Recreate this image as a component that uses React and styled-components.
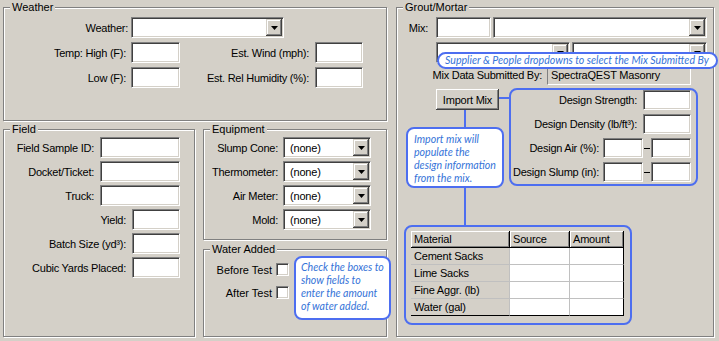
import React from 'react';
import styled, { createGlobalStyle } from 'styled-components';

const BG = '#d4d0c8';
const BLUE = '#4d6ef0';
const NOTE = '#3573d8';

const GlobalStyle = createGlobalStyle`
  html, body { margin: 0; padding: 0; background: ${BG}; }
  body {
    font-family: "Liberation Sans", Arial, sans-serif;
    font-size: 11px;
    letter-spacing: -0.2px;
    color: #000;
  }
  * { box-sizing: border-box; }
`;

const Page = styled.div`
  width: 719px;
  height: 341px;
  padding: 7px 0 0 3px;
  display: grid;
  grid-template-columns: 384px 318px;
  column-gap: 9px;
  align-items: start;
  background: ${BG};
  overflow: hidden;
`;

const LeftSide = styled.div`
  display: flex;
  flex-direction: column;
  gap: 8px;
`;

const Split = styled.div`
  display: grid;
  grid-template-columns: 192px 184px;
  column-gap: 8px;
  align-items: start;
`;

const Stack = styled.div`
  display: flex;
  flex-direction: column;
  gap: 9px;
`;

// etched windows group box
const Group = styled.div`
  position: relative;
  width: ${(p) => p.$w}px;
  height: ${(p) => p.$h}px;
  border: 1px solid #808080;
  box-shadow: inset 1px 1px 0 #fff, 1px 1px 0 #fff;
`;

const Legend = styled.div`
  width: fit-content;
  margin: -8px 0 0 6px;
  padding: 0 2px;
  height: 14px;
  line-height: 14px;
  letter-spacing: 0;
  background: ${BG};
`;

const Label = styled.div`
  text-align: right;
  white-space: nowrap;
  letter-spacing: ${(p) => (p.$plain ? 0 : -0.25)}px;
  padding-right: ${(p) => p.$pad || 0}px;
`;

const Sunken = styled.div`
  width: ${(p) => p.$w}px;
  height: ${(p) => p.$h || 21}px;
  flex-shrink: 0;
  background: #fff;
  border: 1px solid;
  border-color: #808080 #fff #fff #808080;
  box-shadow: inset 1px 1px 0 #404040, inset -1px -1px 0 ${BG};
`;

const ReadOnly = styled.div`
  width: ${(p) => p.$w}px;
  height: 20px;
  border: 1px solid;
  border-color: #808080 #fff #fff #808080;
  padding-left: 3px;
  line-height: 18px;
  white-space: nowrap;
`;

const SelectBox = styled(Sunken)`
  display: flex;
  align-items: center;
  padding: 1px 1px 1px 6px;
`;

const SelectText = styled.span`
  flex: 1;
  white-space: nowrap;
`;

const DropBtn = styled.div`
  width: 16px;
  height: 100%;
  background: ${BG};
  box-shadow: inset -1px -1px 0 #404040, inset 1px 1px 0 ${BG}, inset -2px -2px 0 #808080, inset 2px 2px 0 #fff;
  display: flex;
  align-items: center;
  justify-content: center;
`;

const Select = ({ w, value }) => (
  <SelectBox $w={w}>
    <SelectText>{value}</SelectText>
    <DropBtn>
      <svg width="7" height="4" viewBox="0 0 7 4">
        <polygon points="0,0 7,0 3.5,4" fill="#000" />
      </svg>
    </DropBtn>
  </SelectBox>
);

const CheckBox = styled(Sunken)`
  width: 13px;
  height: 13px;
`;

const Button = styled.div`
  width: ${(p) => p.$w}px;
  height: 21px;
  flex-shrink: 0;
  display: flex;
  align-items: center;
  justify-content: center;
  background: ${BG};
  box-shadow: inset -1px -1px 0 #404040, inset 1px 1px 0 #fff, inset -2px -2px 0 #808080, inset 2px 2px 0 ${BG};
`;

/* weather */
const WeatherGrid = styled.div`
  display: grid;
  grid-template-columns: 127px 49px 135px 48px;
  grid-auto-rows: 21px;
  row-gap: 4px;
  margin-top: 3px;
  align-items: center;
`;

const Wide = styled.div`
  grid-column: 2 / span 3;
`;

/* stacked right aligned rows */
const Rows = styled.div`
  display: flex;
  flex-direction: column;
  gap: ${(p) => p.$gap || 3}px;
  padding: ${(p) => p.$pad};
`;

const Row = styled.div`
  display: flex;
  align-items: center;
  justify-content: flex-end;
  gap: ${(p) => p.$gap || 6}px;
  height: ${(p) => p.$h || 21}px;
`;

/* water */
const WaterBody = styled.div`
  display: flex;
  align-items: flex-start;
`;

const CheckCol = styled.div`
  width: 85px;
  flex-shrink: 0;
  margin-top: 3px;
  display: flex;
  flex-direction: column;
  gap: 2px;
`;

const Callout = styled.div`
  flex-shrink: 0;
  width: ${(p) => p.$w}px;
  height: ${(p) => p.$h}px;
  margin-left: ${(p) => p.$ml || 0}px;
  padding: ${(p) => p.$pad};
  background: #fff;
  border: 2px solid ${BLUE};
  border-radius: 8px;
  color: ${NOTE};
  font-family: Lato, "Open Sans", sans-serif;
  font-style: italic;
  font-size: 10.6px;
  letter-spacing: 0;
  line-height: 13px;
  white-space: nowrap;
`;

const TopNote = styled(Callout)`
  position: absolute;
  left: 40px;
  top: 44px;
  border-radius: 9px;
`;

/* grout */
const GroutTop = styled.div`
  padding-top: 3px;
  display: flex;
  flex-direction: column;
`;

const MixRow = styled.div`
  display: flex;
  align-items: center;
  gap: ${(p) => p.$gap || 2}px;
  height: ${(p) => p.$h || 21}px;
  margin-top: ${(p) => p.$mt || 0}px;
  margin-left: ${(p) => p.$ml || 0}px;
`;

const Lower = styled.div`
  margin-top: 3px;
  padding-left: 7px;
  display: flex;
  align-items: flex-start;
`;

const Flow = styled.div`
  width: 95px;
  display: flex;
  flex-direction: column;
  align-items: flex-start;
`;

const VLine = styled.div`
  width: 2px;
  height: ${(p) => p.$h}px;
  margin-left: ${(p) => p.$ml || 0}px;
  background: ${BLUE};
`;

const HLine = styled.div`
  width: 10px;
  height: 2px;
  margin-top: 9px;
  flex-shrink: 0;
  background: ${BLUE};
`;

const Panel = styled.div`
  width: ${(p) => p.$w}px;
  height: ${(p) => p.$h}px;
  margin-left: ${(p) => p.$ml || 0}px;
  padding: ${(p) => p.$pad};
  border: 2px solid ${BLUE};
  border-radius: 8px;
  flex-shrink: 0;
`;

const Pair = styled.div`
  display: flex;
  align-items: center;
`;

const Dash = styled.div`
  width: 8px;
  display: flex;
  justify-content: center;
  &::before {
    content: '';
    width: 6px;
    height: 1px;
    background: #000;
  }
`;

/* table */
const Table = styled.table`
  border-collapse: separate;
  border-spacing: 0;
  table-layout: fixed;
  width: 213px;
`;

const Th = styled.th`
  width: ${(p) => p.$w}px;
  height: 17px;
  padding: 0 0 0 3px;
  text-align: left;
  font-weight: normal;
  background: ${BG};
  border-right: 1px solid #000;
  border-bottom: 1px solid #000;
  box-shadow: inset 1px 1px 0 #fff, inset -1px -1px 0 #808080;
  line-height: 15px;
`;

const Td = styled.td`
  height: 17px;
  padding: 0 0 0 3px;
  background: ${(p) => (p.$head ? BG : '#fff')};
  border-right: 1px solid ${(p) => (p.$edge ? '#000' : '#c0c0c0')};
  border-bottom: 1px solid ${(p) => (p.$last ? '#000' : '#c0c0c0')};
  line-height: 16px;
  white-space: nowrap;
`;

const materials = ['Cement Sacks', 'Lime Sacks', 'Fine Aggr. (lb)', 'Water (gal)'];

export default function App() {
  return (
    <Page>
      <GlobalStyle />
      <LeftSide>
        <Group $w={384} $h={114}>
          <Legend>Weather</Legend>
          <WeatherGrid>
            <Label $pad={3}>Weather:</Label>
            <Wide>
              <Select w={153} />
            </Wide>
            <Label $pad={5}>Temp: High (F):</Label>
            <Sunken $w={49} />
            <Label $pad={6}>Est. Wind (mph):</Label>
            <Sunken $w={48} />
            <Label $pad={5}>Low (F):</Label>
            <Sunken $w={49} />
            <Label $pad={6}>Est. Rel Humidity (%):</Label>
            <Sunken $w={48} />
          </WeatherGrid>
        </Group>
        <Split>
          <Group $w={192} $h={208}>
            <Legend>Field</Legend>
            <Rows $pad="1px 14px 0 0">
              <Row><Label>Field Sample ID:</Label><Sunken $w={80} /></Row>
              <Row><Label>Docket/Ticket:</Label><Sunken $w={80} /></Row>
              <Row><Label>Truck:</Label><Sunken $w={80} /></Row>
              <Row><Label>Yield:</Label><Sunken $w={48} /></Row>
              <Row><Label>Batch Size (yd³):</Label><Sunken $w={48} /></Row>
              <Row><Label>Cubic Yards Placed:</Label><Sunken $w={48} /></Row>
            </Rows>
          </Group>
          <Stack>
            <Group $w={184} $h={111}>
              <Legend>Equipment</Legend>
              <Rows $pad="1px 15px 0 0">
                <Row $gap={5}><Label>Slump Cone:</Label><Select w={88} value="(none)" /></Row>
                <Row $gap={5}><Label>Thermometer:</Label><Select w={88} value="(none)" /></Row>
                <Row $gap={5}><Label>Air Meter:</Label><Select w={88} value="(none)" /></Row>
                <Row $gap={5}><Label>Mold:</Label><Select w={88} value="(none)" /></Row>
              </Rows>
            </Group>
            <Group $w={184} $h={88}>
              <Legend>Water Added</Legend>
              <WaterBody>
                <CheckCol>
                  <Row $gap={4}><Label $plain>Before Test</Label><CheckBox /></Row>
                  <Row $gap={4}><Label $plain>After Test</Label><CheckBox /></Row>
                </CheckCol>
                <Callout $w={97} $h={64} $ml={5} $pad="3px 0 0 5px">
                  Check the boxes to
                  <br />
                  show fields to
                  <br />
                  enter the amount
                  <br />
                  of water added.
                </Callout>
              </WaterBody>
            </Group>
          </Stack>
        </Split>
      </LeftSide>

      <Group $w={318} $h={330}>
        <Legend>Grout/Mortar</Legend>
        <GroutTop>
          <MixRow>
            <Label style={{ width: 31 }}>Mix:</Label>
            <Sunken $w={55} style={{ marginLeft: 6 }} />
            <Select w={214} />
          </MixRow>
          <MixRow $mt={4} $ml={39}>
            <Select w={134} />
            <Select w={135} />
          </MixRow>
          <MixRow $mt={2} $h={20} $gap={5}>
            <Label style={{ width: 145 }}>Mix Data Submitted By:</Label>
            <ReadOnly $w={144}>SpectraQEST Masonry</ReadOnly>
          </MixRow>
        </GroutTop>
        <Lower>
          <Flow>
            <Button $w={63} style={{ marginTop: 1, marginLeft: 32 }}>Import Mix</Button>
            <VLine $h={17} $ml={60} />
            <Callout $w={98} $h={61} $ml={2} $pad="4px 0 0 6px">
              Import mix will
              <br />
              populate the
              <br />
              design information
              <br />
              from the mix.
            </Callout>
            <VLine $h={37} $ml={60} />
          </Flow>
          <HLine />
          <Panel $w={189} $h={98} $pad="0 5px 0 0">
            <Rows $gap={4}>
              <Row $h={20}><Label>Design Strength:</Label><Sunken $w={48} $h={20} /></Row>
              <Row $h={20}><Label>Design Density (lb/ft³):</Label><Sunken $w={48} $h={20} /></Row>
              <Row $h={20} $gap={4}>
                <Label>Design Air (%):</Label>
                <Pair><Sunken $w={40} $h={20} /><Dash /><Sunken $w={40} $h={20} /></Pair>
              </Row>
              <Row $h={20} $gap={4}>
                <Label>Design Slump (in):</Label>
                <Pair><Sunken $w={40} $h={20} /><Dash /><Sunken $w={40} $h={20} /></Pair>
              </Row>
            </Rows>
          </Panel>
        </Lower>
        <Panel $w={228} $h={100} $ml={7} $pad="4px 0 0 5px">
          <Table>
            <thead>
              <tr>
                <Th $w={99}>Material</Th>
                <Th $w={60}>Source</Th>
                <Th $w={54}>Amount</Th>
              </tr>
            </thead>
            <tbody>
              {materials.map((m, i) => (
                <tr key={m}>
                  <Td $head $last={i === materials.length - 1}>{m}</Td>
                  <Td $last={i === materials.length - 1} />
                  <Td $edge $last={i === materials.length - 1} />
                </tr>
              ))}
            </tbody>
          </Table>
        </Panel>
        <TopNote $w={281} $h={17} $pad="0 0 0 6px">
          Supplier &amp; People dropdowns to select the Mix Submitted By
        </TopNote>
      </Group>
    </Page>
  );
}
